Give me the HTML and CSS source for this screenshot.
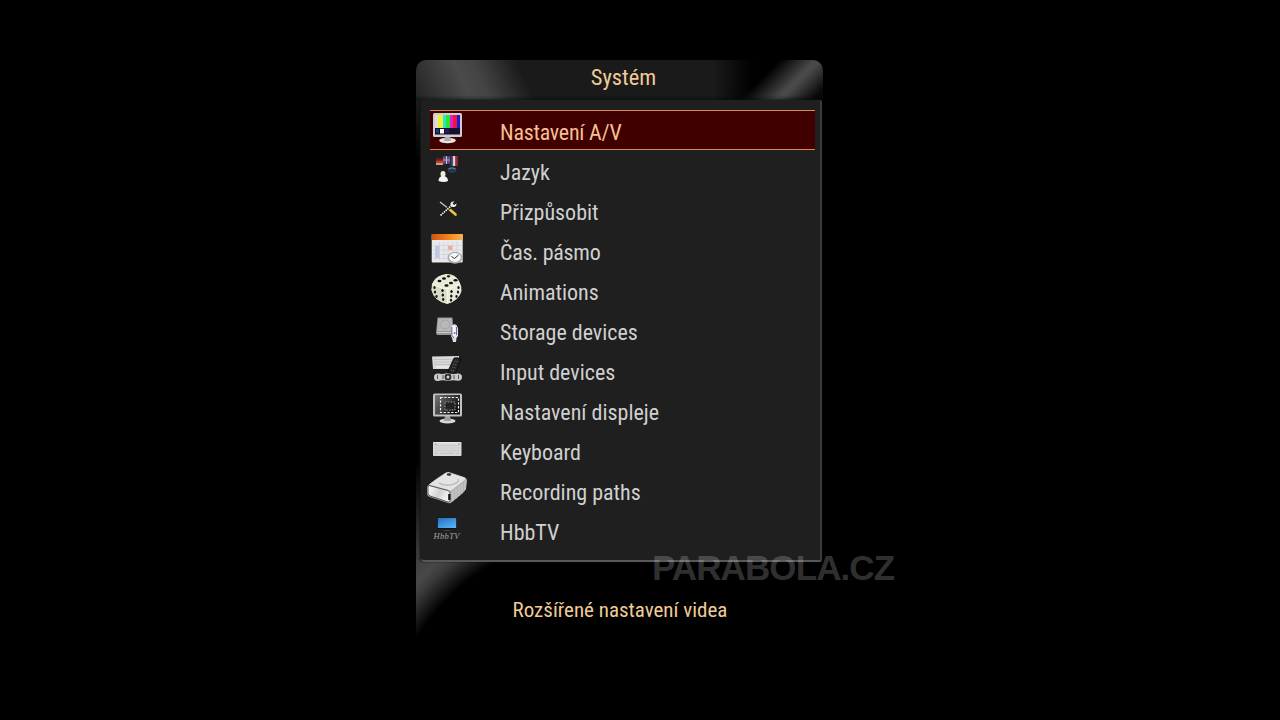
FILE: index.html
```html
<!DOCTYPE html>
<html lang="cs">
<head>
    <meta charset="UTF-8">
    <meta name="viewport" content="width=device-width, initial-scale=1.0">
    <title>Systém</title>
    <link rel="stylesheet" href="styles.css">
</head>
<body>
    <main class="panel">
        <header class="panel-header">
            <h1>Systém</h1>
        </header>
        <ul class="menu">
            <li class="menu-item selected">
                <svg class="icon" viewBox="0 0 44 40">
                    <ellipse cx="22.5" cy="30.5" rx="8.3" ry="2.7" fill="#e9e3e3"/>
                    <path d="M20 26h5l1 5h-7z" fill="#b5a9a9"/>
                    <rect x="8" y="3" width="29" height="24" rx="1.5" fill="#d2cdd0"/>
                    <rect x="10" y="5" width="25" height="19.5" fill="#15102c"/>
                    <path d="M10 5h3v13h-3z" fill="#ddd"/>
                    <path d="M13 5h5v13h-5z" fill="#f2f22a"/>
                    <path d="M18 5h3v13h-3z" fill="#25e6dd"/>
                    <path d="M21 5h4v13h-4z" fill="#2ae62e"/>
                    <path d="M25 5h3v13h-3z" fill="#e81bd2"/>
                    <path d="M28 5h4v13h-4z" fill="#ea1742"/>
                    <path d="M32 5h3v13h-3z" fill="#1b1bd0"/>
                    <path d="M11 19h3v4h-3z" fill="#153c80"/>
                    <path d="M15 19h4v4.5h-4z" fill="#fff"/>
                    <path d="M20 19h4v4h-4z" fill="#301570"/>
                </svg>
                <span>Nastavení A/V</span>
            </li>
            <li class="menu-item">
                <svg class="icon" viewBox="0 0 44 40">
                    <path d="M11 8h7v2.5h-7z" fill="#641d20"/>
                    <path d="M11 10.5h7v2.5h-7z" fill="#c33b32"/>
                    <path d="M11 13h7v2h-7z" fill="#c9a36b"/>
                    <path d="M18 6h7v8h-7z" fill="#443e78"/>
                    <path d="M18 8h7M18 12h7" stroke="#b64d60"/>
                    <path d="M18 10h7M21.5 6v8" stroke="#b9b9d8" stroke-width="1"/>
                    <path d="M25.5 6h2.3v10h-2.3z" fill="#343a73"/>
                    <path d="M27.8 6h2.7v10h-2.7z" fill="#d8d4d4"/>
                    <path d="M30.5 6h2.3v10h-2.3z" fill="#a52334"/>
                    <ellipse cx="27" cy="20" rx="4.5" ry="3" fill="#26394f"/>
                    <path d="M23.5 19q3.500-2 7 0" stroke="#6c829b" stroke-width="1.2" fill="none"/>
                    <ellipse cx="18" cy="24" rx="2.5" ry="3" fill="#f2ead8"/>
                    <path d="M13.5 31q0-4 3.500-5h2q4 1 4 5-4 2-9.500 0z" fill="#f4f4f4"/>
                </svg>
                <span>Jazyk</span>
            </li>
            <li class="menu-item">
                <svg class="icon" viewBox="0 0 44 40">
                    <path d="M15 12l9 7" stroke="#c9c9c9" stroke-width="1.3"/>
                    <path d="M23.5 18.5l7 6" stroke="#e2b62c" stroke-width="2.8" stroke-linecap="round"/>
                    <path d="M23 18l8 6" stroke="#f8e27c" stroke-width=".8"/>
                    <path d="M15.5 25.5l11-10" stroke="#111" stroke-width="3.2"/>
                    <path d="M15.5 25.5l11-10" stroke="#e8e8e8" stroke-width="1.8" stroke-dasharray="1.6 .7"/>
                    <path d="M29.5 11.5q-4-.5-4 2.5t3 3q3-.2 3-3.5l-2.5 1.5-1.5-1.5z" fill="#f0f0f0"/>
                </svg>
                <span>Přizpůsobit</span>
            </li>
            <li class="menu-item">
                <svg class="icon" viewBox="0 0 44 40">
                    <defs>
                        <linearGradient id="orange" x2="1">
                            <stop offset="0" stop-color="#cf5510"/>
                            <stop offset=".6" stop-color="#f68a1c"/>
                            <stop offset="1" stop-color="#f9b350"/>
                        </linearGradient>
                    </defs>
                    <rect x="6.7" y="4" width="31" height="28.5" rx="1" fill="#e9e9ec"/>
                    <rect x="6.7" y="4" width="31" height="6" fill="url(#orange)"/>
                    <path d="M10 16h4.5v12H10z" fill="#b9c9e6"/>
                    <path d="M23 15.5h4.5v4.5H23z" fill="#efaa9f"/>
                    <path d="M8 15.5h29M8 20h29M8 24.5h29M8 28.5h29M14.5 12v18M19 12v18M23 12v18M27.5 12v18M32 12v18" stroke="#cdcdd4" stroke-width=".6"/>
                    <ellipse cx="30" cy="27.8" rx="7.5" ry="6" fill="#a9aeb3"/>
                    <ellipse cx="30" cy="27.4" rx="5.8" ry="4.5" fill="#f5f6f7"/>
                    <path d="M26.5 26.5l3 2 4-3.5" stroke="#333" stroke-width="1" fill="none"/>
                </svg>
                <span class="tight">Čas. pásmo</span>
            </li>
            <li class="menu-item">
                <svg class="icon" viewBox="0 0 44 40">
                    <path d="M8 12Q12 5 21 4q9-.5 13 7 3 5 2.5 10-2 9-14 13Q9 31 6.500 20z" fill="#e9ead9"/>
                    <path d="M7 13q5 4 15 6 1 8 .5 15Q9 31 6.500 20z" fill="#d9dbc7"/>
                    <path d="M7 14q7 4 15 5 7-1 13-6M22 19l.5 14" stroke="#f9faf0" fill="none"/>
                    <g fill="#12120e">
                        <ellipse cx="14.5" cy="11" rx="2" ry="1.2"/>
                        <ellipse cx="19" cy="8.5" rx="2" ry="1.2"/>
                        <ellipse cx="23.5" cy="6.3" rx="1.8" ry="1.1"/>
                        <ellipse cx="21.5" cy="15.5" rx="2.1" ry="1.2"/>
                        <ellipse cx="26" cy="13" rx="2" ry="1.2"/>
                        <ellipse cx="30.5" cy="10.3" rx="2" ry="1.2"/>
                        <ellipse cx="9.5" cy="17.5" rx="1.1" ry="1.5"/>
                        <ellipse cx="10" cy="22" rx="1.1" ry="1.5"/>
                        <ellipse cx="11.5" cy="26.5" rx="1.1" ry="1.4"/>
                        <ellipse cx="17.5" cy="20.5" rx="1.2" ry="1.5"/>
                        <ellipse cx="17.8" cy="25" rx="1.2" ry="1.5"/>
                        <ellipse cx="18.2" cy="29.5" rx="1.1" ry="1.4"/>
                        <ellipse cx="26.5" cy="21.5" rx="1.2" ry="1.5"/>
                        <ellipse cx="26.3" cy="26" rx="1.2" ry="1.5"/>
                        <ellipse cx="26" cy="30.2" rx="1.1" ry="1.4"/>
                        <ellipse cx="33.5" cy="17.5" rx="1.1" ry="1.5"/>
                        <ellipse cx="33" cy="22" rx="1.1" ry="1.5"/>
                        <ellipse cx="31.5" cy="26.5" rx="1.1" ry="1.4"/>
                    </g>
                </svg>
                <span>Animations</span>
            </li>
            <li class="menu-item">
                <svg class="icon" viewBox="0 0 44 40">
                    <path d="M12.5 7.5h15l1 15.5-1.5 2H12l-1-2z" fill="#969696"/>
                    <path d="M13.5 8.5h13l1 12.5H12z" fill="#b8b8b8"/>
                    <ellipse cx="20" cy="14.5" rx="5" ry="4.5" fill="none" stroke="#a2a2a2"/>
                    <path d="M12 22.5h15" stroke="#ccc"/>
                    <path d="M26.5 16q2-3 5-1l1.5 3v8l-1.5 2-.5 4h-3l-1-4-1-2z" fill="#e0dce8"/>
                    <path d="M27.5 16q3-1 3 2v9l-3-1z" fill="#f8f8fb"/>
                    <path d="M26.8 17v8l2 3M31.5 17v8" stroke="#65588e" fill="none" stroke-width=".9"/>
                    <circle cx="29.5" cy="23" r="1" fill="#7770a0"/>
                </svg>
                <span>Storage devices</span>
            </li>
            <li class="menu-item">
                <svg class="icon" viewBox="0 0 44 40">
                    <path d="M7 6.5l27-.5v5l-7 8H8z" fill="#d9d9d9"/>
                    <path d="M9 9.5h22M9 12h20M10 14.5h18" stroke="#bcbcbc" stroke-width="1" stroke-dasharray="2 .6"/>
                    <path d="M11 17h14" stroke="#f3f3f3"/>
                    <path d="M29 8q4-1 7 1l-6 15q-4 0-7-3z" fill="#252525" stroke="#080808" stroke-width=".8"/>
                    <path d="M29.5 11l4 1M28 14l4 1M27 17l4 1M26 20l3 1" stroke="#676767" stroke-width=".9" stroke-dasharray="1.3 .7"/>
                    <path d="M9 27q0-3.500 4-3.500 5 1 9-.5 6 1.500 11 .5 4 0 4 3.500 0 4-4 3.800-5-1.300-10 .2-5-1.500-10 0-4 .5-4-4z" fill="#c9c9c9"/>
                    <circle cx="23" cy="27" r="3.4" fill="#303030"/>
                    <circle cx="23" cy="27" r="1.5" fill="#d2d2d2"/>
                    <path d="M12.5 25v4M17 26h2M17 28h2M28 26h2M28 28h2M33.5 25v4" stroke="#555"/>
                </svg>
                <span>Input devices</span>
            </li>
            <li class="menu-item">
                <svg class="icon" viewBox="0 0 44 40">
                    <defs>
                        <linearGradient id="screen" x2="1" y2=".5">
                            <stop offset="0" stop-color="#777"/>
                            <stop offset="1" stop-color="#111"/>
                        </linearGradient>
                    </defs>
                    <ellipse cx="22.5" cy="31" rx="8" ry="2.4" fill="#d8d8d8"/>
                    <path d="M20 26h5l1 5h-7z" fill="#a0a0a0"/>
                    <rect x="8" y="3.5" width="29" height="23" rx="1.5" fill="#c2c2c2"/>
                    <rect x="10" y="5" width="25" height="19.5" fill="url(#screen)"/>
                    <rect x="15.5" y="7.5" width="18" height="15" fill="none" stroke="#f2f2f2" stroke-width="1.2" stroke-dasharray="2.3 1.5"/>
                    <rect x="20" y="12" width="10" height="8" fill="#222" stroke="#999" stroke-dasharray="1.5 1.3"/>
                </svg>
                <span>Nastavení displeje</span>
            </li>
            <li class="menu-item">
                <svg class="icon" viewBox="0 0 44 40">
                    <rect x="8" y="12" width="28.5" height="14" rx=".8" fill="#d8d8d8"/>
                    <path d="M10 15.5h24M10 18h24M10 20.5h24" stroke="#c6c6c6" stroke-width="1.2" stroke-dasharray="2 .5"/>
                    <path d="M10 23.2h3M15 23.2h14M31 23.2h3" stroke="#bebebe"/>
                    <path d="M8.5 12.8h27" stroke="#efefef"/>
                    <path d="M9.5 14h2M33 14h2" stroke="#888" stroke-width=".8"/>
                </svg>
                <span>Keyboard</span>
            </li>
            <li class="menu-item">
                <svg class="icon" viewBox="0 0 44 40">
                    <defs>
                        <linearGradient id="face" x2="1" y2=".4">
                            <stop offset="0" stop-color="#fff"/>
                            <stop offset=".6" stop-color="#cfd0d4"/>
                            <stop offset="1" stop-color="#f1f1f1"/>
                        </linearGradient>
                    </defs>
                    <path d="M2 17Q3 14 20 3q2-1.500 4-1l15 5q3 1 3 4l-1 8q-1 3-14 13-2 2-4 1L5 27q-3-1-3-4z" fill="#b4b4b4"/>
                    <path d="M4 14.5L21 3q2-1 4 0l14 4.5q2 1 .5 2.5L26 20.5z" fill="#e4e4e4"/>
                    <path d="M14 13q7 4 15 1 6-2 4-5" stroke="#bdbdbd" stroke-width="1.5" fill="none"/>
                    <ellipse cx="24" cy="4.5" rx="2.3" ry="1.2" fill="#303030"/>
                    <path d="M4 15.5l19 5q2 1 2 3v7q0 2-2 1.500L5 26q-2-1-2-3v-6q0-1.500 1-1.500z" fill="url(#face)" stroke="#3c3c3c" stroke-width=".8"/>
                    <path d="M28 21v10M31 18.5v10M34 16v10M37 14v9.5M40 11v9" stroke="#d5d5d5" stroke-width=".8"/>
                    <path d="M24.3 24v6" stroke="#111" stroke-width="2.2"/>
                </svg>
                <span>Recording paths</span>
            </li>
            <li class="menu-item">
                <svg class="icon" viewBox="0 0 44 40">
                    <defs>
                        <linearGradient id="tv" x2=".7" y2="1">
                            <stop offset="0" stop-color="#2170ba"/>
                            <stop offset="1" stop-color="#58aef5"/>
                        </linearGradient>
                    </defs>
                    <rect x="12" y="7.5" width="20" height="11.5" fill="#101418"/>
                    <rect x="12.8" y="8" width="18.4" height="10" fill="url(#tv)"/>
                    <path d="M19 20.5h6" stroke="#2c4257"/>
                    <text class="hbb" x="8.5" y="29.3" textLength="26">HbbTV</text>
                </svg>
                <span>HbbTV</span>
            </li>
        </ul>
        <footer class="description">Rozšířené nastavení videa</footer>
    </main>
    <div class="watermark">PARABOLA.CZ</div>
</body>
</html>
```
FILE: styles.css
```css
:root {
    --gold: #f0cb98;
    --menu-bg: #1f1f1f;
    --selected-bg: #400000;
    --selected-line: #d98a5c;
}
body {
    margin: 0;
    height: 720px;
    overflow: hidden;
    background-color: #000;
    font-family: 'Roboto Condensed', 'Roboto', sans-serif;
    font-stretch: 75%;
    font-size: 22px;
    color: #d0d0d0;
}
.panel {
    width: 407px;
    height: 580px;
    margin: 60px 0 0 416px;
    border-radius: 10px 10px 0 0;
    /* glossy sheen under the menu and along its left edge */
    background:
        radial-gradient(circle at 200px 205px, #000 236px, #161616 245px, #3a3a3a 260px, #484848 270px, #404040 286px) 0 500px / 119px 80px no-repeat,
        linear-gradient(to bottom, #1c1c1c, #000 60px, #000 360px, #3c3c3c 460px) 0 40px / 5px 460px no-repeat,
        #000;
    display: flex;
    flex-direction: column;
}
.panel-header {
    height: 40px;
    flex: none;
    border-radius: 10px 10px 0 0;
    background:
        linear-gradient(to bottom, rgba(0, 0, 0, 0) 35px, rgba(0, 0, 0, 0.35) 40px),
        linear-gradient(135deg, transparent 33px, #484848 58px, #4a4a4a 62px, #0a0a0a 84px) 317px 0 / 90px 40px no-repeat,
        linear-gradient(90deg, transparent, #000 40px) 297px 0 / 110px 40px no-repeat,
        linear-gradient(65deg, #222 0, #323232 18px, #4a4a4a 50px, #444 68px, #1a1a1a 108px) 0 0 / 130px 40px no-repeat,
        #1a1a1a;
}
.panel-header h1 {
    margin: 0;
    padding-left: 8px;
    font-size: 22.5px;
    font-weight: 400;
    line-height: 35px;
    text-align: center;
    color: var(--gold);
}
.menu {
    flex: none;
    box-sizing: border-box;
    height: 462px;
    width: 401px;
    margin: 0 0 0 5px;
    padding: 10px 5px 10px 9px;
    list-style: none;
    background-color: var(--menu-bg);
    border-right: 2px solid #3c3c3c;
    border-bottom: 2px solid #585858;
    border-radius: 0 2px 2px 4px;
    box-shadow: -1px 0 2px #161616;
}
.menu-item {
    display: flex;
    box-sizing: border-box;
    height: 40px;
    line-height: 46px;
    white-space: nowrap;
}
.menu-item.selected {
    color: #f6bf94;
    background-color: var(--selected-bg);
    box-shadow: inset 0 1px var(--selected-line), inset 0 -1px var(--selected-line);
}
.menu-item.selected span,
.menu-item .tight {
    letter-spacing: -0.25px;
}
.icon {
    flex: none;
    width: 44px;
    height: 40px;
    margin-left: -5px;
    margin-right: 31px;
}
.hbb {
    font: italic 8.5px 'Liberation Serif', serif;
    fill: #a5a5a5;
}
.description {
    flex: 1;
    padding-left: 1px;
    line-height: 97px;
    font-size: 21px;
    text-align: center;
    color: var(--gold);
}
.watermark {
    position: absolute;
    left: 652px;
    top: 548px;
    font: bold 35px/40px 'Liberation Sans', Arial, sans-serif;
    letter-spacing: -0.9px;
    color: rgba(255, 255, 255, 0.2);
}
```
